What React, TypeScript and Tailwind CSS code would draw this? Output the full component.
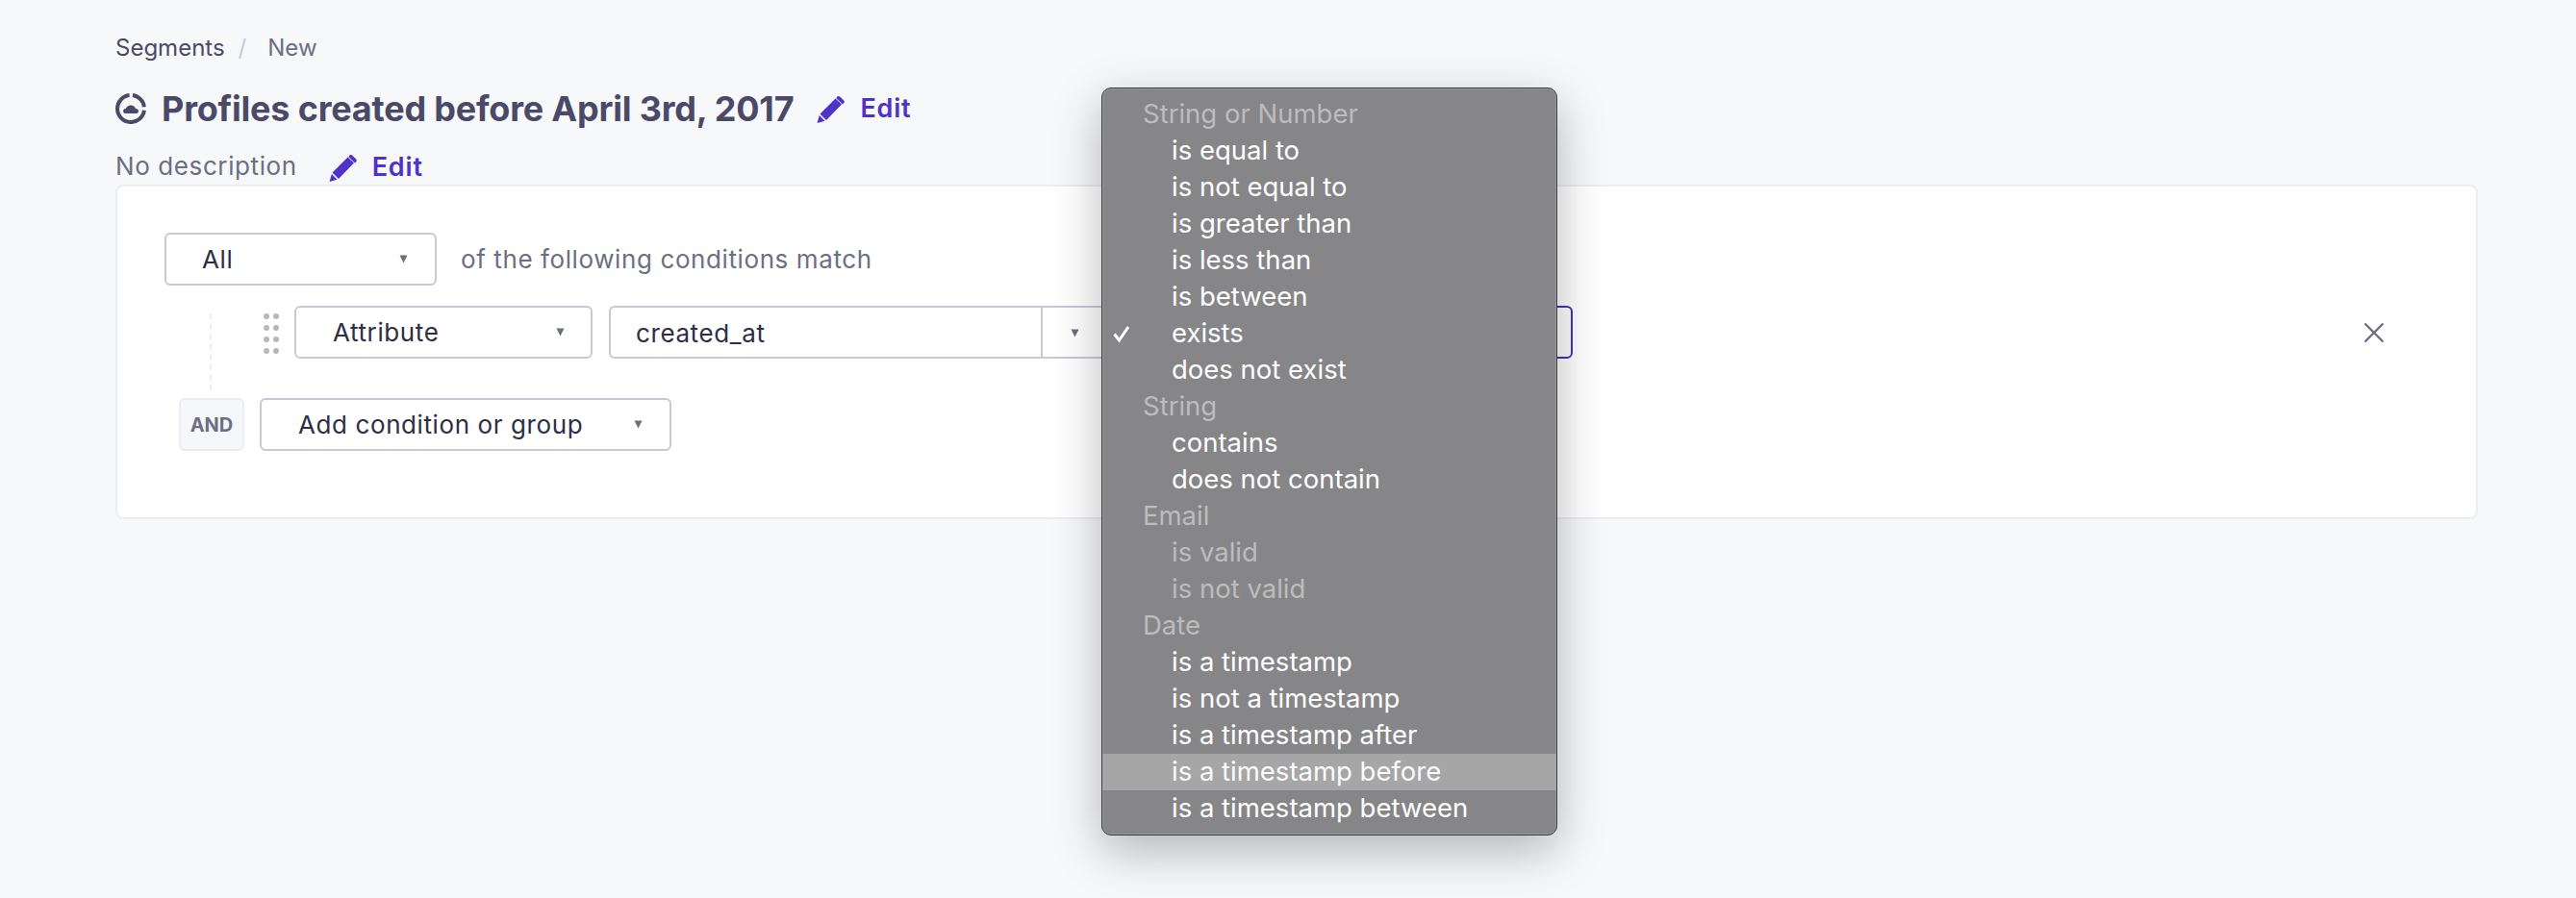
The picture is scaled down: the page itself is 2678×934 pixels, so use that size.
const font = { fontFamily: "Inter, 'Liberation Sans', sans-serif" };

function Caret({ className = "" }: { className?: string }) {
  return (
    <svg width="9" height="9" viewBox="0 0 9 9" className={className}>
      <path d="M0.5 0.5H8.5L4.5 8.5Z" fill="#6b6f82" />
    </svg>
  );
}

function Pencil() {
  return (
    <svg width="30" height="29" viewBox="0 0 30 29" className="shrink-0">
      <path d="M19.5 3.5 L26 9.5 L10 26 L3.5 19.5 Z" fill="#4f32c9" />
      <path d="M21 1.8 C22 0.8 23.4 0.8 24.4 1.7 L28 5.2 C29 6.2 29 7.6 28 8.6 L27 9.6 L20.4 3.2 Z" fill="#4f32c9" />
      <path d="M2.8 21 L8.5 26.8 L0.5 29 Z" fill="#4f32c9" />
    </svg>
  );
}

function EditLink({ gap }: { gap: string }) {
  return (
    <span className={`flex items-center ${gap}`}>
      <Pencil />
      <span className="text-[27px] font-semibold tracking-[0.8px] text-[#4f32c9]">Edit</span>
    </span>
  );
}

function SegmentIcon() {
  return (
    <svg width="32" height="32" viewBox="0 0 32 32" className="shrink-0">
      <g fill="none" stroke="#4a4a68" strokeWidth="4">
        <path d="M14.5 2.1 A14 14 0 1 0 29.9 17.8" />
        <path d="M18 2.1 A14 14 0 0 1 29.9 14.2" />
      </g>
      <path d="M11 21 C9 21 8 19.8 8 18.4 C8 16.8 9.4 15.8 10.8 16 C11.4 14 13.4 12.4 16 12.4 C18.6 12.4 20.4 14 21 16 C22.6 15.8 24 16.8 24 18.4 C24 19.8 23 21 21 21 Z" fill="#4a4a68" />
    </svg>
  );
}

function Select({ label, className, textPad, caretPad }: { label: string; className: string; textPad: string; caretPad: string }) {
  return (
    <div className={`flex h-[55px] items-center justify-between rounded-[6px] border-2 border-[#c9c8d6] bg-white text-[26px] tracking-[0.6px] text-[#2e2e45] ${className} ${textPad} ${caretPad}`}>
      <span>{label}</span>
      <Caret />
    </div>
  );
}

type Row = { t: string; kind: "label" | "item" | "off" | "hover"; check?: boolean };

const rows: Row[] = [
  { t: "String or Number", kind: "label" },
  { t: "is equal to", kind: "item" },
  { t: "is not equal to", kind: "item" },
  { t: "is greater than", kind: "item" },
  { t: "is less than", kind: "item" },
  { t: "is between", kind: "item" },
  { t: "exists", kind: "item", check: true },
  { t: "does not exist", kind: "item" },
  { t: "String", kind: "label" },
  { t: "contains", kind: "item" },
  { t: "does not contain", kind: "item" },
  { t: "Email", kind: "label" },
  { t: "is valid", kind: "off" },
  { t: "is not valid", kind: "off" },
  { t: "Date", kind: "label" },
  { t: "is a timestamp", kind: "item" },
  { t: "is not a timestamp", kind: "item" },
  { t: "is a timestamp after", kind: "item" },
  { t: "is a timestamp before", kind: "hover" },
  { t: "is a timestamp between", kind: "item" },
];

function Dropdown() {
  return (
    <div
      className="absolute left-[1145px] top-[91px] w-[474px] rounded-[10px] border border-[#3d3d3f] bg-[#868688] py-[8px] shadow-[inset_0_0_0_1px_#99999b,0_16px_50px_rgba(0,0,0,0.28)] text-[27.5px]"
      style={font}
    >
      {rows.map((r) => (
        <div
          key={r.t}
          className={`relative flex h-[38px] items-center ${r.kind === "hover" ? "bg-[#a6a6a7] text-[#fbfbfb]" : ""} ${r.kind === "item" ? "text-white" : ""} ${r.kind === "off" || r.kind === "label" ? "text-[#bcbcbd]" : ""} ${r.kind === "label" ? "pl-[42px]" : "pl-[72px]"}`}
        >
          {r.check && (
            <svg width="20" height="20" viewBox="0 0 20 20" className="absolute left-[10px] top-[9px]">
              <path d="M2.5 10.5 L7.5 17 L17 3" fill="none" stroke="#ffffff" strokeWidth="3" />
            </svg>
          )}
          {r.t}
        </div>
      ))}
    </div>
  );
}

export default function App() {
  return (
    <div className="relative h-[934px] overflow-hidden bg-[#f7f8fa] pl-[120px] pr-[102px] pt-[30px]" style={font}>
      <div className="flex h-[40px] items-center text-[24px]">
        <span className="text-[#4a4a68]">Segments</span>
        <span className="ml-[14px] text-[#c9c8d6]">/</span>
        <span className="ml-[22px] text-[#6b6f82]">New</span>
      </div>

      <div className="mt-[23px] flex h-[40px] items-center">
        <SegmentIcon />
        <h1 className="ml-[16px] text-[36px] font-bold tracking-[-0.2px] text-[#4a4a68]">Profiles created before April 3rd, 2017</h1>
        <span className="ml-[24px]"><EditLink gap="gap-[15px]" /></span>
      </div>

      <div className="mt-[20px] flex h-[39px] items-center">
        <span className="text-[26px] tracking-[0.6px] text-[#6b6f82]">No description</span>
        <span className="ml-[33px] pt-[3px]"><EditLink gap="gap-[15px]" /></span>
      </div>

      <div className="h-[348px] rounded-[8px] border-2 border-[#ecedf2] bg-white pl-[49px] pt-[48px]">
        <div className="flex items-center">
          <Select label="All" className="w-[283px]" textPad="pl-[37px]" caretPad="pr-[28px]" />
          <span className="ml-[25px] text-[26px] tracking-[0.6px] text-[#6b6f82]">of the following conditions match</span>
        </div>

        <div className="mt-[21px] flex h-[55px] items-start">
          <div className="ml-[47px] mt-[8px] h-[80px] border-l-2 border-dashed border-[#ebecf1]" />
          <div className="ml-[54px] mt-[8px] grid grid-cols-2 gap-x-[4px] gap-y-[6px]">
            {Array.from({ length: 8 }).map((_, i) => (
              <span key={i} className="h-[6px] w-[6px] rounded-full bg-[#b7b8bb]" />
            ))}
          </div>
          <Select label="Attribute" className="ml-[16px] w-[310px]" textPad="pl-[38px]" caretPad="pr-[27px]" />
          <div className="ml-[17px] flex h-[55px] w-[520px] items-stretch rounded-l-[6px] border-y-2 border-l-2 border-[#c9c8d6] bg-white text-[26px] tracking-[0.6px] text-[#2e2e45]">
            <span className="flex w-[449px] items-center border-r-2 border-[#c9c8d6] pl-[26px] pt-[2px]">created_at</span>
            <span className="flex w-[67px] items-center pl-[29px] pt-[2px]"><Caret /></span>
          </div>
          <div className="h-[55px] w-[482px] rounded-[6px] border-2 border-[#4a2fbd] bg-white" />
          <div className="flex h-[55px] flex-1 items-center justify-end pr-[95px]">
            <svg width="22" height="22" viewBox="0 0 22 22" className="mt-[1px]">
              <path d="M1.5 1.5 L20.5 20.5 M20.5 1.5 L1.5 20.5" stroke="#6b6f82" strokeWidth="2.4" />
            </svg>
          </div>
        </div>

        <div className="ml-[15px] mt-[41px] flex items-center">
          <div className="flex h-[55px] w-[68px] items-center justify-center rounded-[6px] border-2 border-[#ebecf1] bg-[#f6f7fa] text-[20px] font-bold text-[#6b6f82]">AND</div>
          <Select label="Add condition or group" className="ml-[16px] w-[428px]" textPad="pl-[38px]" caretPad="pr-[28px]" />
        </div>
      </div>

      <Dropdown />
    </div>
  );
}
